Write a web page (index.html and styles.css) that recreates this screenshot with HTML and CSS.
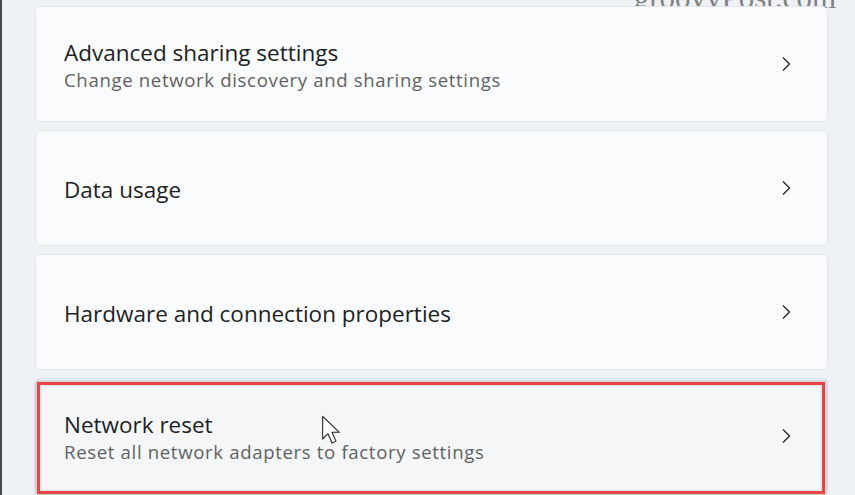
FILE: index.html
```html
<!DOCTYPE html>
<html lang="en">
<head>
  <meta charset="UTF-8">
  <title>Advanced network settings</title>
  <link rel="stylesheet" href="styles.css">
</head>
<body>
<div class="page">
  <div class="mark">groovyPost.com</div>
  <div class="list">
    <div class="card">
      <div class="text">
        <div class="title">Advanced sharing settings</div>
        <div class="desc">Change network discovery and sharing settings</div>
      </div>
      <svg class="chev" width="10" height="16" viewBox="0 0 10 16"><path d="M2 1.5 L8.5 8 L2 14.5" /></svg>
    </div>
    <div class="card">
      <div class="text">
        <div class="title">Data usage</div>
      </div>
      <svg class="chev" width="10" height="16" viewBox="0 0 10 16"><path d="M2 1.5 L8.5 8 L2 14.5" /></svg>
    </div>
    <div class="card">
      <div class="text">
        <div class="title">Hardware and connection properties</div>
      </div>
      <svg class="chev" width="10" height="16" viewBox="0 0 10 16"><path d="M2 1.5 L8.5 8 L2 14.5" /></svg>
    </div>
    <div class="card hover">
      <div class="text">
        <div class="title">Network reset</div>
        <div class="desc">Reset all network adapters to factory settings</div>
      </div>
      <svg class="chev" width="10" height="16" viewBox="0 0 10 16"><path d="M2 1.5 L8.5 8 L2 14.5" /></svg>
      <div class="outline"></div>
      <svg class="cursor" width="22" height="32" viewBox="0 0 16 24">
        <path d="M1 1 L1 18 L5 14 L8 21 L11 19.6 L8 13 L13.5 13 Z" />
      </svg>
    </div>
  </div>
</div>
</body>
</html>
```

FILE: styles.css
```css
* {
  margin: 0;
  padding: 0;
  box-sizing: border-box;
}

body {
  background: #eef2f6;
  font-family: "Open Sans", "Noto Sans", sans-serif;
  overflow: hidden;
}

.page {
  position: relative;
  width: 855px;
  height: 495px;
  border-left: 2px solid #4a4a4a;
  overflow: hidden;
}

/* watermark in the top right corner */
.mark {
  position: absolute;
  right: 19px;
  top: -20px;
  font-family: "Liberation Serif", serif;
  font-size: 31px;
  color: #828282;
}

.list {
  display: flex;
  flex-direction: column;
  gap: 8px;
  padding: 6px 27px 0 33px;
}

.card {
  position: relative;
  height: 116px;
  flex-shrink: 0;
  display: flex;
  align-items: center;
  padding: 0 36px 0 28px;
  background: #fafbfc;
  border: 1px solid #e3e6ea;
  border-radius: 6px;
}

.card.hover {
  background: #f4f6f8;
}

.text {
  flex: 1;
  padding-top: 4px;
}

.title {
  font-size: 22.5px;
  color: #1f1f1f;
  line-height: 28px;
}

.desc {
  font-size: 18.6px;
  letter-spacing: 0.65px;
  color: #626262;
  line-height: 26px;
}

.chev {
  fill: none;
  stroke: #2b2b2b;
  stroke-width: 1.4;
}

/* red highlight drawn over the last card */
.outline {
  position: absolute;
  left: 1px;
  top: 3px;
  width: 788px;
  height: 112px;
  border: 3px solid #ea4448;
  box-shadow: 0 0 3px 1px rgba(0, 0, 0, 0.25), inset 0 0 3px rgba(0, 0, 0, 0.2);
}

.cursor {
  position: absolute;
  left: 285px;
  top: 36px;
}

.cursor path {
  fill: #fff;
  stroke: #222;
  stroke-width: 0.8;
  stroke-linejoin: round;
}
```
